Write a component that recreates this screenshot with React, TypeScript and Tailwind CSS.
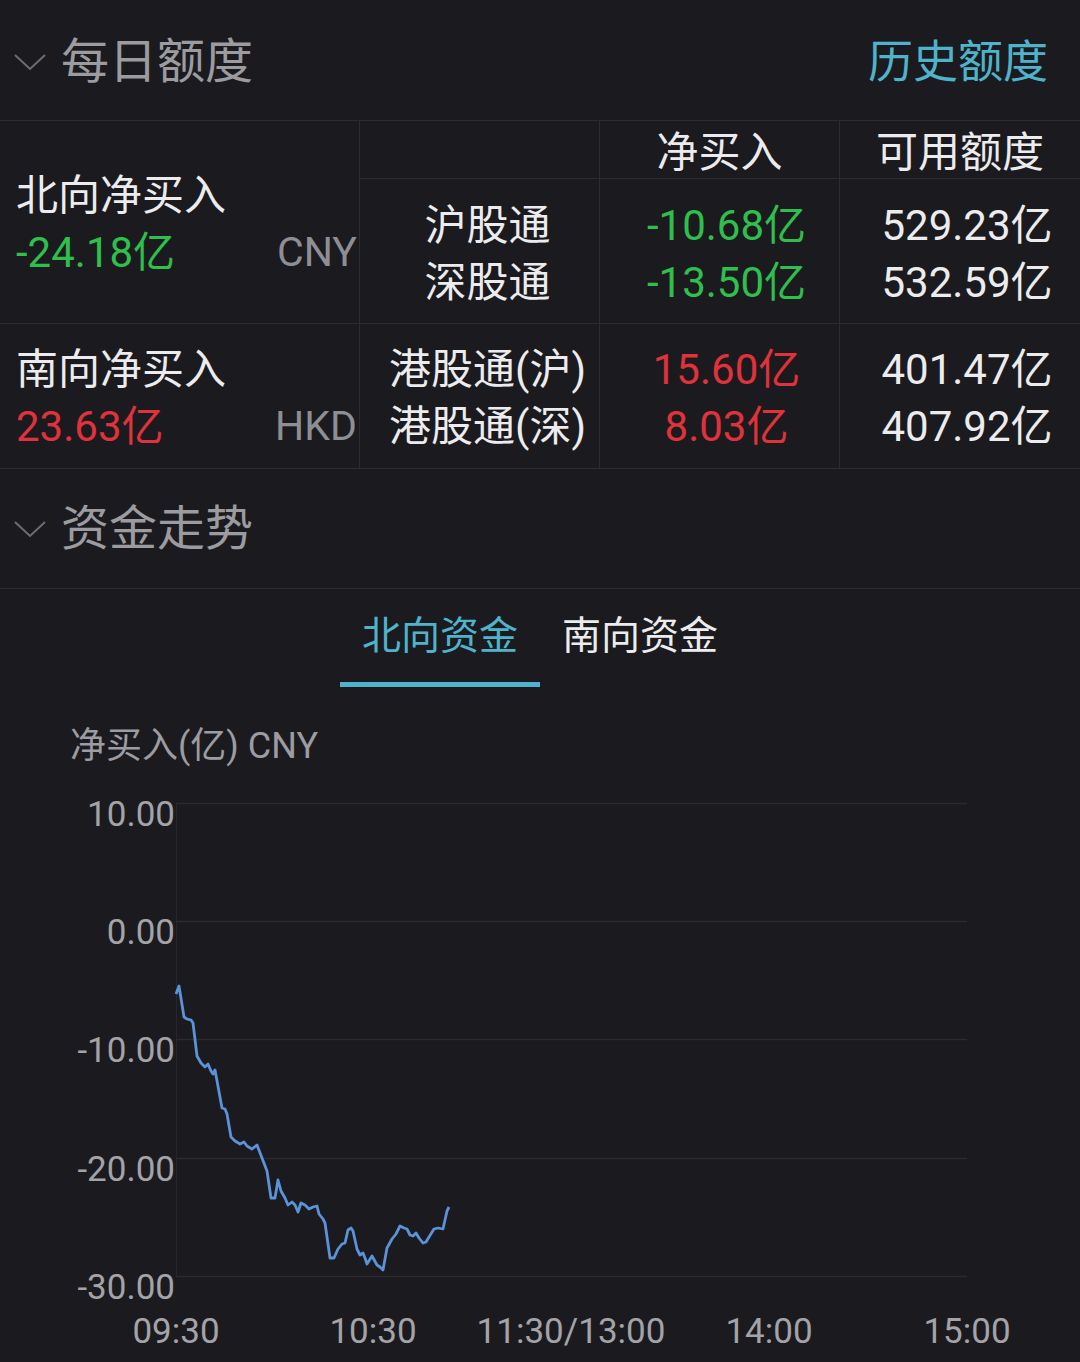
import React from "react";

const pts: [number, number][] = [
  [176, 993], [179, 985], [184, 1016], [187, 1018], [191, 1019], [193, 1022],
  [197, 1055], [201, 1062], [205, 1066], [208, 1063], [211, 1070], [213, 1073],
  [215, 1069], [222, 1107], [225, 1108], [227, 1113], [231, 1136], [235, 1140],
  [240, 1143], [244, 1141], [247, 1145], [252, 1148], [257, 1144], [262, 1157],
  [267, 1170], [271, 1197], [275, 1197], [278, 1179], [281, 1190], [285, 1197],
  [288, 1204], [292, 1201], [295, 1204], [298, 1211], [301, 1202], [305, 1204],
  [309, 1208], [313, 1206], [317, 1205], [319, 1213], [323, 1218], [325, 1222],
  [330, 1257], [334, 1257], [338, 1248], [342, 1243], [345, 1242], [348, 1229],
  [351, 1227], [353, 1230], [357, 1248], [360, 1254], [363, 1252], [365, 1257],
  [367, 1263], [372, 1255], [377, 1264], [380, 1266], [383, 1269], [387, 1247],
  [392, 1238], [396, 1233], [400, 1225], [404, 1227], [407, 1228], [410, 1234],
  [413, 1235], [416, 1232], [419, 1237], [423, 1242], [426, 1241], [429, 1236],
  [434, 1228], [438, 1227], [443, 1228], [445, 1219], [447, 1210], [449, 1206],
];

const Y0 = 686;

function Chevron() {
  return (
    <svg width="34" height="20" viewBox="0 0 34 20" className="shrink-0">
      <polyline points="2,3 17,17 32,3" fill="none" stroke="#6c6c72" strokeWidth="2" />
    </svg>
  );
}

function Chart() {
  const grid = [
    { y: 802, label: "10.00" },
    { y: 920, label: "0.00" },
    { y: 1038, label: "-10.00" },
    { y: 1157, label: "-20.00" },
    { y: 1275, label: "-30.00" },
  ];
  const xs = [
    { x: 176, label: "09:30" },
    { x: 373, label: "10:30" },
    { x: 571, label: "11:30/13:00" },
    { x: 769, label: "14:00" },
    { x: 967, label: "15:00" },
  ];
  const ff = "Roboto, 'Noto Sans CJK SC', sans-serif";
  return (
    <svg width="1080" height="676" viewBox="0 0 1080 676" className="block">
      <text x="70" y={757 - Y0} fill="#9c9ca2" fontSize="36" fontFamily={ff}>
        净买入(亿) CNY
      </text>
      <line x1="176.5" y1={802 - Y0} x2="176.5" y2={1275 - Y0} stroke="#26262b" strokeWidth="1" />
      {grid.map((g) => (
        <g key={g.label}>
          <line x1="176" y1={g.y - Y0 + 0.5} x2="967" y2={g.y - Y0 + 0.5} stroke="#2a2a2f" strokeWidth="1.5" />
          <text x="175" y={g.y - Y0 + 23} textAnchor="end" fill="#a3a3a8" fontSize="35" fontFamily={ff}>
            {g.label}
          </text>
        </g>
      ))}
      {xs.map((x) => (
        <text key={x.label} x={x.x} y={1342 - Y0} textAnchor="middle" fill="#a3a3a8" fontSize="35" fontFamily={ff}>
          {x.label}
        </text>
      ))}
      <polyline
        points={pts.map(([x, y]) => `${x},${y - Y0}`).join(" ")}
        fill="none"
        stroke="#5a93d9"
        strokeWidth="2.8"
        strokeLinejoin="round"
      />
    </svg>
  );
}

export default function App() {
  return (
    <div className="w-[1080px] h-[1362px] overflow-hidden bg-[#1b1b1f] font-['Roboto','Noto_Sans_CJK_SC',sans-serif]">
      {/* header */}
      <div className="h-[120px] flex items-center justify-between pl-[13px] pr-[32px] pt-[4px]">
        <div className="flex items-center gap-[14px]">
          <Chevron />
          <span className="text-[48px] leading-none text-[#9b9ba0]">每日额度</span>
        </div>
        <span className="text-[45px] leading-none text-[#4fb3cc]">历史额度</span>
      </div>

      {/* north */}
      <div className="flex border-t border-[#2c2c31]">
        <div className="w-[360px] h-[202px] border-r border-[#2c2c31] flex flex-col justify-center pl-[16px] pr-[2px] pt-[4px]">
          <div className="text-[42px] leading-[57px] text-[#ececee]">北向净买入</div>
          <div className="flex justify-between items-center leading-[57px]">
            <span className="text-[42px] text-[#2fbf4c]">-24.18亿</span>
            <span className="text-[41px] text-[#8e8e95]">CNY</span>
          </div>
        </div>
        <div className="flex-1 flex flex-col">
          <div className="flex h-[58px] border-b border-[#2c2c31]">
            <div className="w-[240px] border-r border-[#2c2c31]" />
            <div className="w-[240px] border-r border-[#2c2c31] flex items-center justify-center pt-[6px] text-[42px] text-[#ececee]">净买入</div>
            <div className="w-[240px] flex items-center justify-center pt-[6px] text-[42px] text-[#ececee]">可用额度</div>
          </div>
          <div className="flex h-[144px]">
            <div className="w-[240px] border-r border-[#2c2c31] flex flex-col items-center justify-center pl-[16px] pt-[6px] text-[42px] leading-[57px] text-[#ececee]">
              <span>沪股通</span>
              <span>深股通</span>
            </div>
            <div className="w-[240px] border-r border-[#2c2c31] flex flex-col items-center justify-center pl-[14px] pt-[6px] text-[42px] leading-[57px] text-[#2fbf4c]">
              <span>-10.68亿</span>
              <span>-13.50亿</span>
            </div>
            <div className="w-[240px] flex flex-col items-center justify-center pl-[14px] pt-[6px] text-[42px] leading-[57px] text-[#ececee]">
              <span>529.23亿</span>
              <span>532.59亿</span>
            </div>
          </div>
        </div>
      </div>

      {/* south */}
      <div className="flex h-[146px] border-t border-b border-[#2c2c31]">
        <div className="w-[360px] border-r border-[#2c2c31] flex flex-col justify-center pl-[16px] pr-[2px] pt-[4px]">
          <div className="text-[42px] leading-[57px] text-[#ececee]">南向净买入</div>
          <div className="flex justify-between items-center leading-[57px]">
            <span className="text-[42px] text-[#e0323b]">23.63亿</span>
            <span className="text-[41px] text-[#8e8e95]">HKD</span>
          </div>
        </div>
        <div className="w-[240px] border-r border-[#2c2c31] flex flex-col items-center justify-center pl-[16px] pt-[4px] text-[42px] leading-[57px] text-[#ececee]">
          <span>港股通(沪)</span>
          <span>港股通(深)</span>
        </div>
        <div className="w-[240px] border-r border-[#2c2c31] flex flex-col items-center justify-center pl-[14px] pt-[4px] text-[42px] leading-[57px] text-[#e0323b]">
          <span>15.60亿</span>
          <span>8.03亿</span>
        </div>
        <div className="w-[240px] flex flex-col items-center justify-center pl-[14px] pt-[4px] text-[42px] leading-[57px] text-[#ececee]">
          <span>401.47亿</span>
          <span>407.92亿</span>
        </div>
      </div>

      {/* trend header */}
      <div className="h-[120px] flex items-center pl-[13px] border-b border-[#2c2c31]">
        <div className="flex items-center gap-[14px]">
          <Chevron />
          <span className="text-[48px] leading-none text-[#9b9ba0]">资金走势</span>
        </div>
      </div>

      {/* tabs */}
      <div className="h-[98px] flex justify-center">
        <div className="w-[400px] flex">
          <div className="w-[200px] flex flex-col">
            <div className="flex-1 flex items-center justify-center text-[39px] text-[#4fb3cc] pt-[2px]">北向资金</div>
            <div className="h-[5px] bg-[#4fb3cc]" />
          </div>
          <div className="w-[200px] flex flex-col">
            <div className="flex-1 flex items-center justify-center text-[39px] text-[#ececee] pt-[2px]">南向资金</div>
            <div className="h-[5px]" />
          </div>
        </div>
      </div>

      <Chart />
    </div>
  );
}
